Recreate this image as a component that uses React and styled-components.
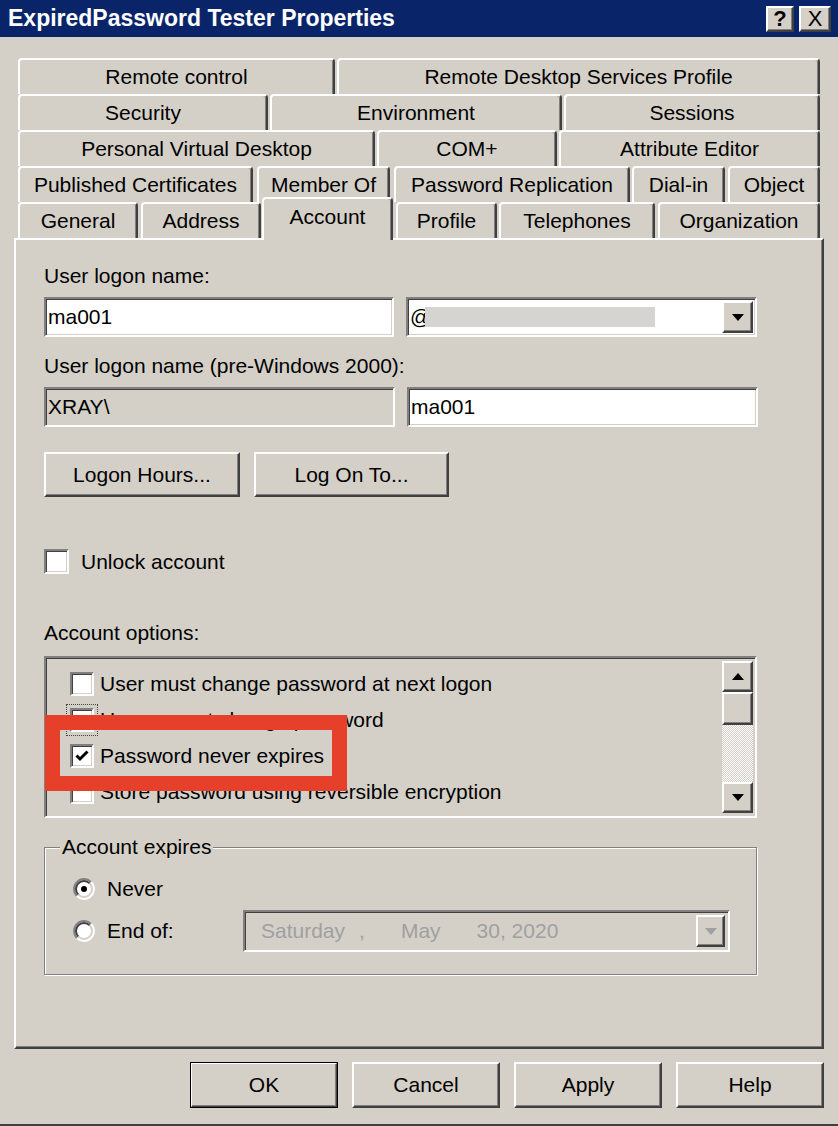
import React from 'react';
import styled, { createGlobalStyle, css } from 'styled-components';

const Global = createGlobalStyle`
  html, body { margin: 0; padding: 0; background: #d4d0c8; }
  body { font-family: "Liberation Sans", Arial, sans-serif; }
`;

const raised = css`
  box-sizing: border-box;
  background: #d4d0c8;
  border: 2px solid;
  border-color: #fff #404040 #404040 #fff;
  box-shadow: inset -1px -1px #808080;
`;

const sunken = css`
  box-sizing: border-box;
  border: 2px solid;
  border-color: #808080 #fff #fff #808080;
  box-shadow: inset 1px 1px #404040, inset -1px -1px #d4d0c8;
`;

const Window = styled.div`
  width: 838px;
  height: 1126px;
  box-sizing: border-box;
  background: #d4d0c8;
  display: flex;
  flex-direction: column;
  overflow: hidden;
  font-family: "Liberation Sans", Arial, sans-serif;
  font-size: 21px;
  color: #000;
  box-shadow: inset 0 -2px #404040;
`;

const TitleBar = styled.div`
  flex: none;
  height: 37px;
  box-sizing: border-box;
  background: #0a246a;
  display: flex;
  align-items: center;
  padding: 0 7px 0 8px;
`;

const Title = styled.div`
  flex: 1;
  color: #fff;
  font-weight: bold;
  font-size: 23px;
  white-space: nowrap;
`;

const CaptionButton = styled.div`
  ${raised};
  width: ${p => p.$w}px;
  height: 26px;
  margin-left: ${p => p.$ml}px;
  display: flex;
  align-items: center;
  justify-content: center;
  font-size: 22px;
  font-weight: ${p => (p.$bold ? 'bold' : 'normal')};
  line-height: 1;
`;

const TabStrip = styled.div`
  margin: 21px 0 0 18px;
  display: flex;
  flex-direction: column;
  position: relative;
  z-index: 1;
`;

const TabRow = styled.div`
  display: flex;
  height: 36px;
`;

const Tab = styled.div`
  flex: none;
  width: ${p => p.$w}px;
  margin-left: ${p => p.$gap}px;
  height: ${p => (p.$selected ? 43 : 36)}px;
  margin-top: ${p => (p.$selected ? -5 : 0)}px;
  padding-bottom: ${p => (p.$selected ? 5 : 0)}px;
  box-sizing: border-box;
  background: #d4d0c8;
  border-top: 2px solid #fff;
  border-left: 2px solid #fff;
  border-right: 2px solid #404040;
  border-top-left-radius: 4px;
  border-top-right-radius: 4px;
  box-shadow: inset -1px 0 #808080;
  display: flex;
  align-items: center;
  justify-content: center;
  white-space: nowrap;
`;

const Panel = styled.div`
  margin-left: 14px;
  width: 810px;
  height: 811px;
  flex: none;
  box-sizing: border-box;
  border: 2px solid;
  border-color: #fff #404040 #404040 #fff;
  box-shadow: inset -1px -1px #808080;
  padding: 24px 0 0 28px;
  display: flex;
  flex-direction: column;
  align-items: flex-start;
`;

const Label = styled.div`
  height: 24px;
  line-height: 24px;
  margin-top: ${p => p.$mt || 0}px;
  white-space: nowrap;
`;

const FieldRow = styled.div`
  display: flex;
  gap: 12px;
  margin-top: 9px;
`;

const TextBox = styled.div`
  ${sunken};
  flex: none;
  width: ${p => p.$w}px;
  height: 40px;
  background: ${p => (p.$disabled ? '#d4d0c8' : '#fff')};
  display: flex;
  align-items: center;
  padding: 0 2px;
  white-space: nowrap;
`;

const ComboText = styled.div`
  flex: 1;
  display: flex;
  align-items: center;
  overflow: hidden;
`;

const Redacted = styled.span`
  display: inline-block;
  width: 230px;
  height: 20px;
  margin-left: -6px;
  background: #d6d4d1;
`;

const DropButton = styled.div`
  ${raised};
  flex: none;
  width: ${p => p.$w}px;
  height: 32px;
  display: flex;
  align-items: center;
  justify-content: center;
`;

const ButtonRow = styled.div`
  display: flex;
  gap: 14px;
  margin-top: 25px;
`;

const PushButton = styled.div`
  ${raised};
  flex: none;
  width: ${p => p.$w}px;
  height: ${p => p.$h || 45}px;
  display: flex;
  align-items: center;
  justify-content: center;
  white-space: nowrap;
  ${p =>
    p.$default &&
    css`
      outline: 1px solid #000;
      outline-offset: -1px;
    `}
`;

const CheckRow = styled.div`
  display: flex;
  align-items: center;
  gap: 12px;
  margin-top: 52px;
  height: 25px;
`;

const CheckBox = styled.span`
  ${sunken};
  flex: none;
  width: ${p => p.$size}px;
  height: ${p => p.$size}px;
  background: #fff;
  display: flex;
  align-items: center;
  justify-content: center;
  ${p =>
    p.$focus &&
    css`
      outline: 1px dotted #444;
      outline-offset: 3px;
    `}
`;

const ListBox = styled.div`
  ${sunken};
  position: relative;
  width: 713px;
  height: 162px;
  margin-top: 11px;
  background: #d4d0c8;
  display: flex;
`;

const ListItems = styled.div`
  flex: 1;
  padding: 8px 0 0 24px;
  display: flex;
  flex-direction: column;
  overflow: hidden;
`;

const ListItem = styled.div`
  height: 36px;
  flex: none;
  display: flex;
  align-items: center;
  gap: 6px;
  white-space: nowrap;
`;

const Highlight = styled.div`
  position: absolute;
  left: -1px;
  top: 57px;
  width: 302px;
  height: 76px;
  box-sizing: border-box;
  border: 15px solid #e6402a;
  pointer-events: none;
`;

const ScrollBar = styled.div`
  flex: none;
  width: 31px;
  margin: 3px 2px 3px 0;
  display: flex;
  flex-direction: column;
`;

const ScrollButton = styled.div`
  ${raised};
  flex: none;
  height: ${p => p.$h}px;
  display: flex;
  align-items: center;
  justify-content: center;
`;

const ScrollTrack = styled.div`
  flex: 1;
  background: repeating-conic-gradient(#fff 0 25%, #d4d0c8 0 50%) 0 0 / 2px 2px;
`;

const Group = styled.fieldset`
  margin: 17px 0 0 0;
  padding: 9px 26px 22px 14px;
  width: 713px;
  min-inline-size: auto;
  box-sizing: border-box;
  border: 1px solid #808080;
  box-shadow: 1px 1px 0 #fff, inset 1px 1px 0 #fff;
`;

const Legend = styled.legend`
  padding: 0 2px;
  margin-left: 1px;
  line-height: 24px;
  background: #d4d0c8;
`;

const RadioRow = styled.div`
  display: flex;
  align-items: center;
  height: 42px;
  padding-left: 14px;
`;

const RadioLabel = styled.span`
  flex: 1;
  margin-left: 12px;
  white-space: nowrap;
`;

const DatePicker = styled.div`
  ${sunken};
  flex: none;
  width: 487px;
  height: 42px;
  background: #d4d0c8;
  color: #a0a0a0;
  display: flex;
  align-items: center;
  padding: 0 3px 0 16px;
  white-space: nowrap;
`;

const DateSeg = styled.span`
  margin-left: ${p => p.$ml || 0}px;
`;

const DateFill = styled.span`
  flex: 1;
`;

const ButtonBar = styled.div`
  display: flex;
  justify-content: flex-end;
  gap: 14px;
  padding: 13px 14px 0 0;
`;

const tabRows = [
  [['Remote control', 18, 335], ['Remote Desktop Services Profile', 337, 820]],
  [['Security', 18, 268], ['Environment', 270, 562], ['Sessions', 564, 820]],
  [['Personal Virtual Desktop', 18, 375], ['COM+', 377, 557], ['Attribute Editor', 559, 820]],
  [
    ['Published Certificates', 18, 253],
    ['Member Of', 257, 390],
    ['Password Replication', 394, 630],
    ['Dial-in', 632, 725],
    ['Object', 728, 820],
  ],
  [
    ['General', 18, 138],
    ['Address', 141, 261],
    ['Account', 262, 393, true],
    ['Profile', 396, 497],
    ['Telephones', 499, 655],
    ['Organization', 658, 820],
  ],
];

const options = [
  { label: 'User must change password at next logon' },
  { label: 'User cannot change password', focus: true },
  { label: 'Password never expires', checked: true },
  { label: 'Store password using reversible encryption' },
];

const Arrow = ({ dir = 'down', color = '#000' }) => (
  <svg width="12" height="7" viewBox="0 0 12 7">
    {dir === 'down' ? (
      <polygon points="0,0 12,0 6,7" fill={color} />
    ) : (
      <polygon points="0,7 12,7 6,0" fill={color} />
    )}
  </svg>
);

const Check = () => (
  <svg width="16" height="16" viewBox="0 0 16 16">
    <path d="M2.5 7.5 L6 11 L13.5 3.5" stroke="#000" strokeWidth="3" fill="none" />
  </svg>
);

const Radio = ({ checked }) => (
  <svg width="22" height="22" viewBox="0 0 22 22" style={{ flex: 'none' }}>
    <circle cx="11" cy="11" r="10" fill="#fff" />
    <path d="M3.93 18.07 A10 10 0 0 1 18.07 3.93" stroke="#808080" strokeWidth="2" fill="none" />
    <path d="M18.07 3.93 A10 10 0 0 1 3.93 18.07" stroke="#fff" strokeWidth="2" fill="none" />
    <path d="M5.34 16.66 A8 8 0 0 1 16.66 5.34" stroke="#404040" strokeWidth="2" fill="none" />
    <path d="M16.66 5.34 A8 8 0 0 1 5.34 16.66" stroke="#d4d0c8" strokeWidth="2" fill="none" />
    {checked && <circle cx="11" cy="11" r="3" fill="#000" />}
  </svg>
);

export default function App() {
  return (
    <>
      <Global />
      <Window>
        <TitleBar>
          <Title>ExpiredPassword Tester Properties</Title>
          <CaptionButton $w={28} $ml={0} $bold>?</CaptionButton>
          <CaptionButton $w={32} $ml={5}>X</CaptionButton>
        </TitleBar>

        <TabStrip>
          {tabRows.map((row, i) => (
            <TabRow key={i}>
              {row.map(([label, l, r, sel], j) => {
                const prevR = j === 0 ? 18 : row[j - 1][2];
                return (
                  <Tab key={label} $w={r - l} $gap={l - prevR} $selected={sel}>
                    {label}
                  </Tab>
                );
              })}
            </TabRow>
          ))}
        </TabStrip>

        <Panel>
          <Label>User logon name:</Label>
          <FieldRow>
            <TextBox $w={350}>ma001</TextBox>
            <TextBox $w={351}>
              <ComboText>
                <span>@</span>
                <Redacted />
              </ComboText>
              <DropButton $w={31}>
                <Arrow />
              </DropButton>
            </TextBox>
          </FieldRow>

          <Label $mt={17}>User logon name (pre-Windows 2000):</Label>
          <FieldRow>
            <TextBox $w={351} $disabled>XRAY\</TextBox>
            <TextBox $w={351}>ma001</TextBox>
          </FieldRow>

          <ButtonRow>
            <PushButton $w={196}>Logon Hours...</PushButton>
            <PushButton $w={195}>Log On To...</PushButton>
          </ButtonRow>

          <CheckRow>
            <CheckBox $size={25} />
            <span>Unlock account</span>
          </CheckRow>

          <Label $mt={47}>Account options:</Label>
          <ListBox>
            <ListItems>
              {options.map(o => (
                <ListItem key={o.label}>
                  <CheckBox $size={24} $focus={o.focus}>
                    {o.checked && <Check />}
                  </CheckBox>
                  <span>{o.label}</span>
                </ListItem>
              ))}
            </ListItems>
            <ScrollBar>
              <ScrollButton $h={31}>
                <Arrow dir="up" />
              </ScrollButton>
              <ScrollButton $h={33} />
              <ScrollTrack />
              <ScrollButton $h={31}>
                <Arrow />
              </ScrollButton>
            </ScrollBar>
            <Highlight />
          </ListBox>

          <Group>
            <Legend>Account expires</Legend>
            <RadioRow>
              <Radio checked />
              <RadioLabel>Never</RadioLabel>
            </RadioRow>
            <RadioRow>
              <Radio />
              <RadioLabel>End of:</RadioLabel>
              <DatePicker>
                <DateSeg>Saturday</DateSeg>
                <DateSeg $ml={14}>,</DateSeg>
                <DateSeg $ml={36}>May</DateSeg>
                <DateSeg $ml={36}>30, 2020</DateSeg>
                <DateFill />
                <DropButton $w={29}>
                  <Arrow color="#a0a0a0" />
                </DropButton>
              </DatePicker>
            </RadioRow>
          </Group>
        </Panel>

        <ButtonBar>
          <PushButton $w={148} $h={46} $default>OK</PushButton>
          <PushButton $w={148} $h={46}>Cancel</PushButton>
          <PushButton $w={148} $h={46}>Apply</PushButton>
          <PushButton $w={148} $h={46}>Help</PushButton>
        </ButtonBar>
      </Window>
    </>
  );
}
